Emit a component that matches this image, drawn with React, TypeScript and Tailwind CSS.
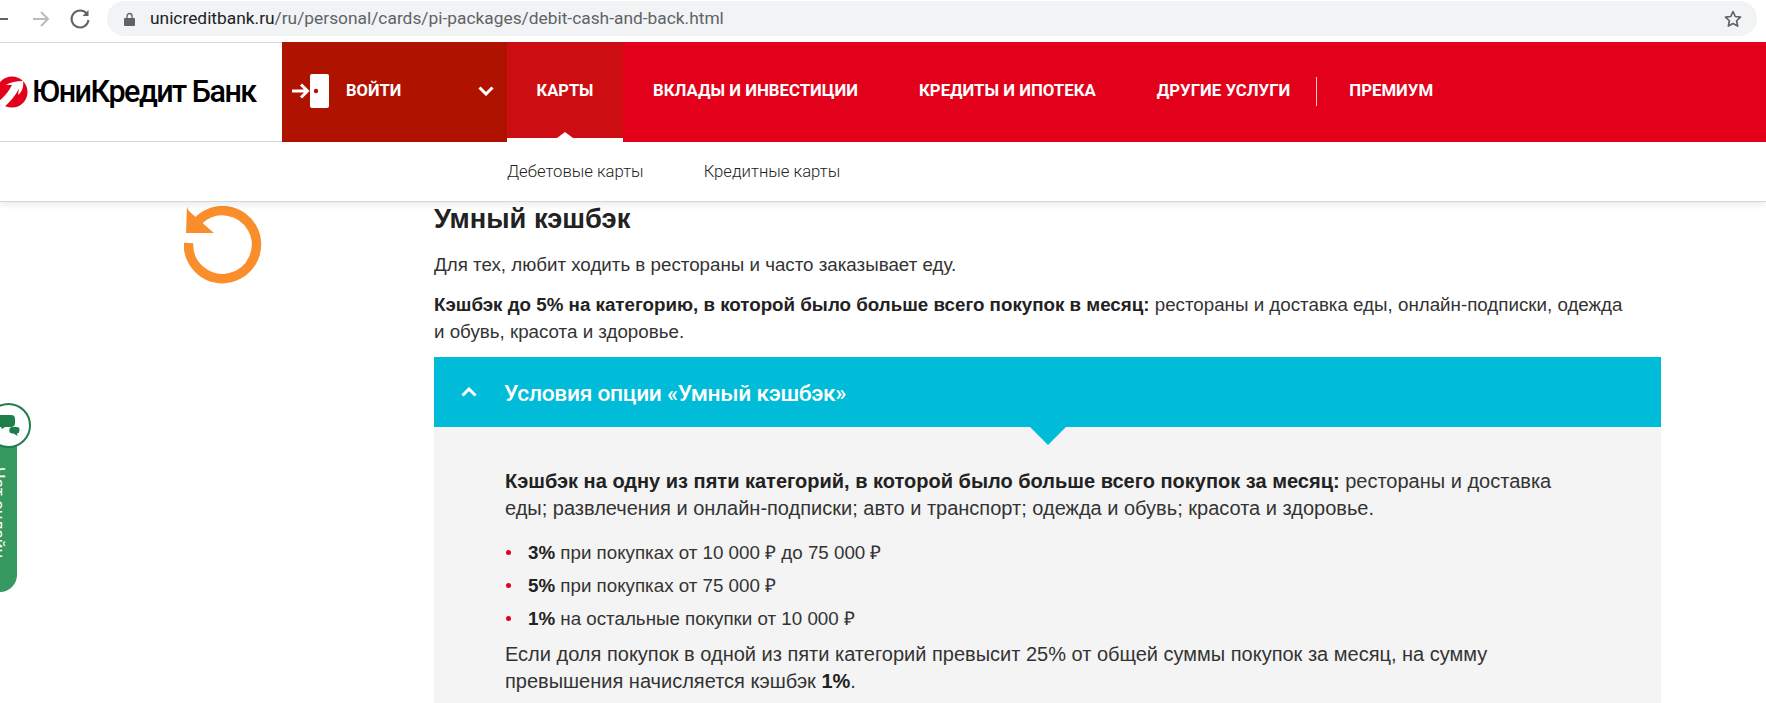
import React from "react";

const nav = ["ВКЛАДЫ И ИНВЕСТИЦИИ", "КРЕДИТЫ И ИПОТЕКА", "ДРУГИЕ УСЛУГИ"];

function Chrome() {
  return (
    <div className="flex h-[42px] items-start bg-white pt-px">
      <div className="flex h-[35px] w-[107px] shrink-0 items-center">
        <svg width="107" height="35" viewBox="0 0 107 35" fill="none" stroke="#5f6368" strokeWidth="2">
          <path d="M-6 18H8" />
          <path d="M33 18H48M41 11l7 7-7 7" stroke="#b9bbbe" />
          <path d="M87 13a8.5 8.5 0 1 0 1.5 6" />
          <path d="M88.5 9v6h-6" fill="#5f6368" stroke="none" />
        </svg>
      </div>
      <div className="flex h-[35px] w-[1650px] shrink-0 items-center rounded-full bg-[#f1f3f4] pl-[17px] pr-[14px]">
        <svg width="11" height="14" viewBox="0 0 11 14" className="mr-[15px] shrink-0">
          <path d="M1 6h9a1 1 0 0 1 1 1v6a1 1 0 0 1-1 1H1a1 1 0 0 1-1-1V7a1 1 0 0 1 1-1z" fill="#5f6368" />
          <path d="M3 6V4a2.5 2.5 0 0 1 5 0v2" fill="none" stroke="#5f6368" strokeWidth="1.3" />
        </svg>
        <span className="font-['Roboto',sans-serif] text-[17.35px] text-[#5f6368]">
          <span className="text-[#202124]">unicreditbank.ru</span>/ru/personal/cards/pi-packages/debit-cash-and-back.html
        </span>
        <svg width="20" height="20" viewBox="0 0 24 24" className="ml-auto" fill="none" stroke="#5f6368" strokeWidth="2" strokeLinejoin="round">
          <path d="M12 3l2.7 6 6.3.7-4.7 4.4 1.3 6.4L12 17.3 6.4 20.5l1.3-6.4L3 9.7 9.3 9z" />
        </svg>
      </div>
    </div>
  );
}

function Logo() {
  return (
    <div className="flex h-[100px] w-[282px] shrink-0 items-center overflow-hidden border-y border-y-[#d9d9d9] bg-white">
      <svg width="31" height="32" viewBox="0 0 31 32" className="shrink-0">
        <circle cx="12" cy="16" r="15.5" fill="#e2001a" />
        <path d="M-4 27C4 22 9 15 12 9H6c5-3 10-4 17-4 1 6-1 11-5 14l1-6c-4 7-9 13-16 19z" fill="#fff" />
      </svg>
      <span className="ml-px whitespace-nowrap font-['Roboto',sans-serif] text-[30.5px] font-medium tracking-[-1.5px] text-black">ЮниКредит Банк</span>
    </div>
  );
}

function Header() {
  return (
    <div className="flex h-[100px] bg-[#e2001a] font-['Roboto',sans-serif] text-[16.5px] font-bold text-white">
      <Logo />
      <div className="flex w-[225px] shrink-0 items-center bg-[#b01200] pb-[2px] pl-[10px] pr-[13px]">
        <svg width="38" height="34" viewBox="0 0 38 34" fill="none" className="shrink-0">
          <rect x="18" y="0" width="19" height="34" rx="2" fill="#fff" />
          <circle cx="24" cy="17" r="2.2" fill="#b01200" />
          <path d="M0 17h15M9 10.5l6.5 6.5L9 23.5" stroke="#fff" strokeWidth="3" />
        </svg>
        <span className="ml-[16px]">ВОЙТИ</span>
        <svg width="16" height="10" viewBox="0 0 16 10" className="ml-auto" fill="none" stroke="#fff" strokeWidth="3">
          <path d="M1.5 1.5L8 8l6.5-6.5" />
        </svg>
      </div>
      <div className="relative flex w-[116px] shrink-0 items-center justify-center bg-[#cc0e13] pb-[2px]">
        КАРТЫ
        <div className="absolute inset-x-0 bottom-0 h-[4px] bg-white" />
        <div className="absolute bottom-[4px] left-[50%] ml-[-8px] h-0 w-0 border-x-[8px] border-b-[6px] border-x-transparent border-b-white" />
      </div>
      <div className="flex items-center gap-[61px] pb-[2px] pl-[30px] text-[16.8px]">
        {nav.map((n) => (
          <span key={n} className="whitespace-nowrap">{n}</span>
        ))}
      </div>
      <div className="mb-[2px] ml-[26px] h-[29px] w-px self-center bg-white/80" />
      <div className="flex items-center pb-[2px] pl-[32px] text-[16.8px]">ПРЕМИУМ</div>
    </div>
  );
}

function SubNav() {
  return (
    <div className="relative z-10 flex h-[60px] items-center gap-[60px] border-b border-b-[#d6d6d6] bg-white pl-[507px] font-['Roboto',sans-serif] text-[16.7px] font-light text-[#222] shadow-[0_3px_6px_rgba(0,0,0,0.08)]">
      <span>Дебетовые карты</span>
      <span>Кредитные карты</span>
    </div>
  );
}

function Refresh() {
  return (
    <svg width="78" height="78" viewBox="0 0 78 78" fill="none">
      <path d="M4.5 37A34 34 0 1 0 14.5 14.5" stroke="#f98e2b" strokeWidth="9.5" />
      <path d="M3 0c0 3 2 5 4 7l23 20H2z" fill="#f98e2b" />
    </svg>
  );
}

function Content() {
  return (
    <div className="h-[501px] w-[1227px] shrink-0 font-['Liberation_Sans',sans-serif] text-[18.75px] leading-[27px] text-[#333]">
      <h2 className="text-[27.3px] font-bold leading-[34px] text-[#222]">Умный кэшбэк</h2>
      <p className="mt-[15px]">Для тех, любит ходить в рестораны и часто заказывает еду.</p>
      <p className="mt-[13px] w-[1195px]">
        <b className="text-[#222]">Кэшбэк до 5% на категорию, в которой было больше всего покупок в месяц:</b> рестораны и доставка еды, онлайн-подписки, одежда и обувь, красота и здоровье.
      </p>
      <div className="relative mt-[12px] flex h-[70px] items-center bg-[#00bcd8] pl-[27px] pt-[3px] text-white">
        <svg width="16" height="10" viewBox="0 0 16 10" fill="none" stroke="#fff" strokeWidth="3" className="mb-[3px] shrink-0">
          <path d="M1.5 8.5L8 2l6.5 6.5" />
        </svg>
        <span className="ml-[27px] font-['Roboto',sans-serif] text-[22.8px] font-medium tracking-[-0.3px]">Условия опции «Умный кэшбэк»</span>
        <div className="absolute left-[596px] top-full h-0 w-0 border-x-[18px] border-t-[18px] border-x-transparent border-t-[#00bcd8]" />
      </div>
      <div className="h-[280px] bg-[#f4f4f4] pl-[71px] pt-[41px]">
        <p className="w-[1060px] text-[20px]">
          <b className="text-[#222]">Кэшбэк на одну из пяти категорий, в которой было больше всего покупок за месяц:</b> рестораны и доставка еды; развлечения и онлайн-подписки; авто и транспорт; одежда и обувь; красота и здоровье.
        </p>
        <ul className="mt-[17px] flex flex-col gap-[6px] pl-px">
          {[
            ["3%", " при покупках от 10 000 ₽ до 75 000 ₽"],
            ["5%", " при покупках от 75 000 ₽"],
            ["1%", " на остальные покупки от 10 000 ₽"],
          ].map(([a, b]) => (
            <li key={a} className="flex items-center">
              <span className="mr-[17px] h-[5px] w-[5px] shrink-0 rounded-full bg-[#e2001a]" />
              <span><b className="text-[#222]">{a}</b>{b}</span>
            </li>
          ))}
        </ul>
        <p className="mt-[9px] w-[1060px] text-[20px]">
          Если доля покупок в одной из пяти категорий превысит 25% от общей суммы покупок за месяц, на сумму превышения начисляется кэшбэк <b className="text-[#222]">1%</b>.
        </p>
      </div>
    </div>
  );
}

function Widget() {
  return (
    <div className="absolute left-0 top-[403px] z-20 w-[31px]">
      <div className="absolute left-0 top-[30px] h-[159px] w-[17px] overflow-hidden rounded-br-[17px] bg-[#359960]">
        <span className="absolute left-[-15px] top-[34px] whitespace-nowrap font-['Roboto',sans-serif] text-[17px] text-white [writing-mode:vertical-rl]">Чат онлайн</span>
      </div>
      <div className="absolute left-[-14px] top-0 h-[45px] w-[45px] rounded-full border-2 border-[#1f7f4b] bg-white">
        <svg width="41" height="41" viewBox="0 0 41 41" fill="#1f7f4b">
          <path d="M10 10h13a4 4 0 0 1 4 4v4a4 4 0 0 1-4 4h-6l-3 2-1-2h-3a4 4 0 0 1-4-4v-4a4 4 0 0 1 4-4z" />
          <path d="M24 22h5a2.5 2.5 0 0 1 2.5 2.5v1a3 3 0 0 1-2.5 3l.5 2.5-4-2.5h-1a3 3 0 0 1 0-6.5z" />
        </svg>
      </div>
    </div>
  );
}

export default function App() {
  return (
    <div className="relative h-[703px] w-[1766px] overflow-hidden bg-white">
      <Chrome />
      <Header />
      <SubNav />
      <div className="flex">
        <div className="w-[434px] shrink-0 pl-[184px] pt-[4px]">
          <Refresh />
        </div>
        <Content />
      </div>
      <Widget />
    </div>
  );
}
